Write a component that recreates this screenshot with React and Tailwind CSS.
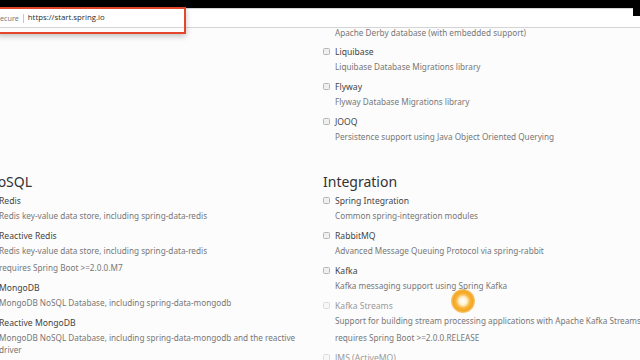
import React from "react";

const topItems = [
  { title: "Liquibase", desc: "Liquibase Database Migrations library" },
  { title: "Flyway", desc: "Flyway Database Migrations library" },
  { title: "JOOQ", desc: "Persistence support using Java Object Oriented Querying" },
];

const nosql = [
  { title: "Redis", desc: "Redis key-value data store, including spring-data-redis" },
  {
    title: "Reactive Redis",
    desc: "Redis key-value data store, including spring-data-redis",
    req: "requires Spring Boot >=2.0.0.M7",
  },
  { title: "MongoDB", desc: "MongoDB NoSQL Database, including spring-data-mongodb" },
  {
    title: "Reactive MongoDB",
    desc: "MongoDB NoSQL Database, including spring-data-mongodb and the reactive driver",
  },
];

const integration = [
  { title: "Spring Integration", desc: "Common spring-integration modules" },
  { title: "RabbitMQ", desc: "Advanced Message Queuing Protocol via spring-rabbit" },
  { title: "Kafka", desc: "Kafka messaging support using Spring Kafka" },
  {
    title: "Kafka Streams",
    desc: "Support for building stream processing applications with Apache Kafka Streams",
    req: "requires Spring Boot >=2.0.0.RELEASE",
    disabled: true,
  },
  { title: "JMS (ActiveMQ)", desc: "Spring JMS support with Apache ActiveMQ", disabled: true },
];

const Checkbox = ({ disabled }) => (
  <span
    className={`mt-[4px] h-[7px] w-[7px] shrink-0 rounded-[1.5px] border ${
      disabled ? "border-[#dcdcdc] bg-[#f7f7f7]" : "border-[#b5b5b5] bg-[#f0f0f0]"
    }`}
  />
);

const Item = ({ item }) => (
  <div className="flex gap-[5px]">
    <Checkbox disabled={item.disabled} />
    <div className="flex min-w-0 flex-col">
      <div
        className={`text-[8.6px] leading-[16px] whitespace-nowrap ${
          item.disabled ? "text-[#9a9a9a]" : "text-[#444]"
        }`}
      >
        {item.title}
      </div>
      <div className="mt-[1px] text-[8.2px] leading-[12px] text-[#777]">{item.desc}</div>
      {item.req && (
        <div className="mt-[5px] text-[8.2px] leading-[12px] text-[#777] whitespace-nowrap">
          {item.req}
        </div>
      )}
    </div>
  </div>
);

const Section = ({ heading, items }) => (
  <div className="flex flex-col">
    <h2 className="mb-[1px] text-[14px] leading-[20px] text-[#333]">{heading}</h2>
    <div className="flex flex-col gap-[6px]">
      {items.map((it) => (
        <Item key={it.title} item={it} />
      ))}
    </div>
  </div>
);

export default function App() {
  return (
    <div
      className="relative h-[360px] w-[640px] overflow-hidden bg-[#fcfcfc]"
      style={{ fontFamily: '"Noto Sans", "Open Sans", sans-serif' }}
    >
      {/* browser chrome */}
      <div className="flex flex-col">
        <div className="h-[8px] bg-black" />
        <div className="flex h-[20px] items-center border-t border-b border-[#d4d4d4] bg-white">
          <span className="text-[7.2px] text-[#7a7a7a]">ecure</span>
          <span className="mx-[4px] h-[9px] w-px bg-[#c8c8c8]" />
          <span
            className="text-[7.8px] font-medium text-[#2a2a2a]"
            style={{ fontFamily: '"Open Sans", sans-serif' }}
          >
            https://start.spring.io
          </span>
        </div>
      </div>
      <div className="absolute right-0 top-0 h-[16px] w-[7px] bg-black" />

      {/* annotation box */}
      <div className="absolute left-[-4px] top-[7px] h-[27px] w-[190px] border-2 border-[#e4462c] shadow-[0_2px_6px_rgba(0,0,0,0.25)]" />

      {/* content */}
      <div className="grid grid-cols-[336px_330px] ml-[-13px]">
        <div />
        <div>
          <div className="ml-[12px] text-[8.2px] leading-[10px] text-[#777] whitespace-nowrap">
            Apache Derby database (with embedded support)
          </div>
          <div className="mt-[6px] flex flex-col gap-[6px]">
            {topItems.map((it) => (
              <Item key={it.title} item={it} />
            ))}
          </div>
        </div>
        <div className="mt-[29px] pr-[18px]">
          <Section heading="NoSQL" items={nosql} />
        </div>
        <div className="mt-[29px]">
          <Section heading="Integration" items={integration} />
        </div>
      </div>

      {/* cursor highlight */}
      <div className="absolute left-[451px] top-[289px] h-[24px] w-[24px] rounded-full bg-[radial-gradient(circle,#ffffff_0%,#fff3d6_22%,#f7b43a_42%,#f5a623_58%,rgba(248,190,90,0.35)_80%,rgba(250,210,130,0)_100%)]" />
    </div>
  );
}
